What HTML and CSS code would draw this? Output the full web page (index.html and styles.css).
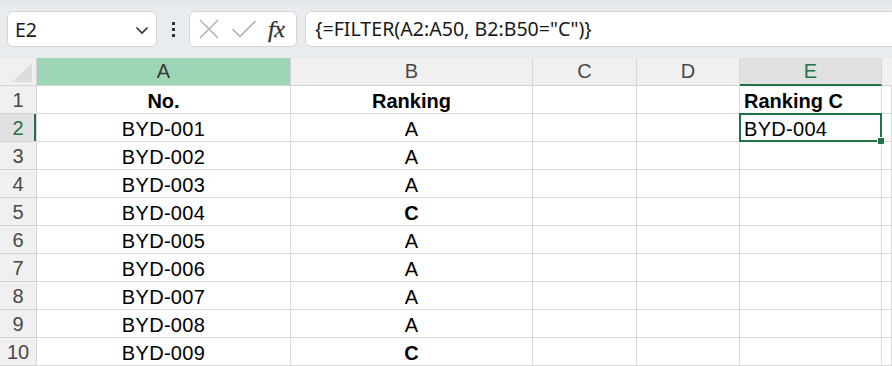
FILE: index.html
```html
<!DOCTYPE html>
<html>
<head>
<meta charset="utf-8">
<link rel="stylesheet" href="styles.css">
</head>
<body>
<div class="toolbar">
  <div class="namebox">
    <span class="name">E2</span>
    <svg class="chev" width="14" height="9" viewBox="0 0 14 9"><path d="M1.5 1.5 L7 7 L12.5 1.5" fill="none" stroke="#333" stroke-width="1.6"/></svg>
  </div>
  <div class="dots"><span></span><span></span><span></span></div>
  <div class="iconbox">
    <svg width="22" height="22" viewBox="0 0 22 22"><path d="M2 2 L20 20 M20 2 L2 20" stroke="#b4b4b4" stroke-width="1.6" fill="none"/></svg>
    <svg width="26" height="22" viewBox="0 0 26 22"><path d="M1.5 11 L9 18.5 L24.5 3" stroke="#b4b4b4" stroke-width="1.6" fill="none"/></svg>
    <span class="fx">fx</span>
  </div>
  <div class="formula">{=FILTER(A2:A50, B2:B50="C")}</div>
</div>
<div class="sheet">
  <div class="hdr corner"><span class="tri"></span></div>
  <div class="hdr col colA">A</div>
  <div class="hdr col">B</div>
  <div class="hdr col">C</div>
  <div class="hdr col">D</div>
  <div class="hdr col colE">E</div>
  <div class="hdr col colF"></div>

  <div class="hdr row">1</div>
  <div class="cell c b">No.</div>
  <div class="cell c b">Ranking</div>
  <div class="cell"></div>
  <div class="cell"></div>
  <div class="cell b">Ranking C</div>
  <div class="cell"></div>

  <div class="hdr row rowsel">2</div>
  <div class="cell c">BYD-001</div>
  <div class="cell c">A</div>
  <div class="cell"></div>
  <div class="cell"></div>
  <div class="cell sel"><span>BYD-004</span><i class="handle"></i></div>
  <div class="cell"></div>

  <div class="hdr row">3</div>
  <div class="cell c">BYD-002</div>
  <div class="cell c">A</div>
  <div class="cell"></div><div class="cell"></div><div class="cell"></div><div class="cell"></div>

  <div class="hdr row">4</div>
  <div class="cell c">BYD-003</div>
  <div class="cell c">A</div>
  <div class="cell"></div><div class="cell"></div><div class="cell"></div><div class="cell"></div>

  <div class="hdr row">5</div>
  <div class="cell c">BYD-004</div>
  <div class="cell c b">C</div>
  <div class="cell"></div><div class="cell"></div><div class="cell"></div><div class="cell"></div>

  <div class="hdr row">6</div>
  <div class="cell c">BYD-005</div>
  <div class="cell c">A</div>
  <div class="cell"></div><div class="cell"></div><div class="cell"></div><div class="cell"></div>

  <div class="hdr row">7</div>
  <div class="cell c">BYD-006</div>
  <div class="cell c">A</div>
  <div class="cell"></div><div class="cell"></div><div class="cell"></div><div class="cell"></div>

  <div class="hdr row">8</div>
  <div class="cell c">BYD-007</div>
  <div class="cell c">A</div>
  <div class="cell"></div><div class="cell"></div><div class="cell"></div><div class="cell"></div>

  <div class="hdr row">9</div>
  <div class="cell c">BYD-008</div>
  <div class="cell c">A</div>
  <div class="cell"></div><div class="cell"></div><div class="cell"></div><div class="cell"></div>

  <div class="hdr row">10</div>
  <div class="cell c">BYD-009</div>
  <div class="cell c b">C</div>
  <div class="cell"></div><div class="cell"></div><div class="cell"></div><div class="cell"></div>
</div>
</body>
</html>
```
FILE: styles.css
```css
html, body {
  margin: 0;
  padding: 0;
  background: #ffffff;
  overflow: hidden;
}
body {
  width: 892px;
  height: 366px;
  font-family: "Liberation Sans", Arial, sans-serif;
}
.toolbar {
  height: 58px;
  box-sizing: border-box;
  padding-top: 11px;
  display: flex;
  align-items: flex-start;
  background: linear-gradient(#dfe2e6 0px, #e9ecef 9px, #e9ecef 100%);
}
.namebox {
  margin-left: 7px;
  width: 150px;
  height: 36px;
  box-sizing: border-box;
  background: #fff;
  border: 1px solid #d3d5d8;
  border-radius: 6px;
  display: flex;
  align-items: center;
  padding: 0 7px 0 7px;
}
.name {
  flex: 1;
  font-family: "Noto Sans", "Open Sans", sans-serif;
  font-size: 19.5px;
  color: #1a1a1a;
}
.chev { margin-top: 2px; }
.dots {
  width: 32px;
  height: 36px;
  display: flex;
  flex-direction: column;
  align-items: center;
  justify-content: center;
  gap: 3px;
}
.dots span {
  width: 3px;
  height: 3px;
  background: #333;
}
.iconbox {
  width: 108px;
  height: 36px;
  box-sizing: border-box;
  background: #fff;
  border: 1px solid #d3d5d8;
  border-radius: 6px;
  display: flex;
  align-items: center;
  padding-left: 8px;
  gap: 11px;
}
.fx {
  font-family: "Liberation Serif", "DejaVu Serif", serif;
  font-style: italic;
  font-size: 24px;
  color: #333;
  margin-left: 0px;
  letter-spacing: -0.5px;
  -webkit-text-stroke: 0.3px #333;
}
.formula {
  margin-left: 8px;
  flex: 1;
  height: 36px;
  box-sizing: border-box;
  background: #fff;
  border: 1px solid #d3d5d8;
  border-right: none;
  border-radius: 6px 0 0 6px;
  padding-left: 9px;
  font-family: "Noto Sans", "Open Sans", sans-serif;
  font-size: 19.6px;
  line-height: 33px;
  color: #1a1a1a;
}
.sheet {
  display: grid;
  grid-template-columns: 37px 254px 242px 104px 103px 142px 1fr;
  grid-auto-rows: 28px;
}
.sheet > div {
  box-sizing: border-box;
  border-right: 1px solid #dadada;
  border-bottom: 1px solid #dadada;
}
.hdr {
  background: #f0f0f0;
  color: #484848;
  font-size: 20px;
  display: flex;
  align-items: center;
  justify-content: center;
}
.sheet > .hdr {
  border-color: #d4d4d4;
}
.corner {
  justify-content: flex-end;
  align-items: flex-end;
  padding: 0 4px 3px 0;
}
.tri {
  width: 20px;
  height: 19px;
  background: #dcdcdc;
  clip-path: polygon(100% 0, 100% 100%, 0 100%);
}
.colA {
  background: #9fd5b7;
  color: #3a3a3a;
}
.sheet > .colE {
  background: #e1e1e1;
  color: #217346;
  border-bottom: 2px solid #217346;
}
.colF { border-right: none !important; }
.row {
  padding-top: 2px;
}
.rowsel {
  color: #217346;
  background: #e1e1e1;
  box-shadow: inset -2px 0 0 #217346;
}
.cell {
  font-size: 20px;
  color: #000;
  display: flex;
  align-items: center;
  padding-left: 4px;
  padding-top: 3px;
  white-space: nowrap;
  letter-spacing: 0.3px;
}
.c {
  justify-content: center;
  padding-left: 0;
}
.b { font-weight: bold; letter-spacing: 0; }
.sel {
  position: relative;
  overflow: visible;
}
.sel::after {
  content: "";
  position: absolute;
  left: -1px;
  top: -1px;
  right: -1px;
  bottom: -1px;
  border: 2px solid #217346;
  pointer-events: none;
}
.handle {
  position: absolute;
  right: -4px;
  bottom: -4px;
  width: 6px;
  height: 6px;
  background: #217346;
  border: 1px solid #fff;
  z-index: 2;
}
```
